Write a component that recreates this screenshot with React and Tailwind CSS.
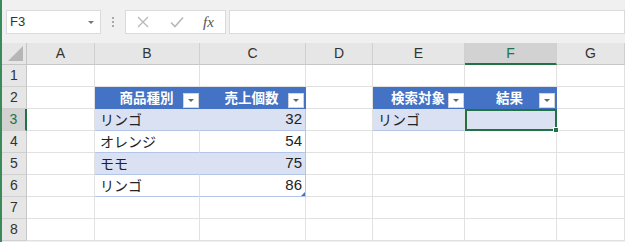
const COLS = ['A', 'B', 'C', 'D', 'E', 'F', 'G']

function Dropdown() {
  return (
    <span className="absolute bottom-0 right-[1px] flex h-[15px] w-[16px] items-center justify-center border border-[#d4d4d4] bg-white">
      <span className="h-0 w-0 border-x-[3px] border-t-[3px] border-x-transparent border-t-[#666]" />
    </span>
  )
}

function Cell({ className = '', children }) {
  return (
    <div className={`flex items-center overflow-hidden border-b border-r border-[#e1e1e1] px-[3px] ${className}`}>
      {children}
    </div>
  )
}

function HeadCell({ label, last }) {
  return (
    <div
      className={`relative flex items-center justify-center border-b border-[#4472c4] bg-[#4472c4] text-[13.5px] font-bold text-white ${
        last ? 'border-r' : ''
      }`}
    >
      <span className="pr-[2px]">{label}</span>
      <Dropdown />
    </div>
  )
}

const band = 'bg-[#d9e1f2] border-b-[#b4c6e7]'
const plain = 'bg-white border-b-[#b4c6e7]'

export default function App() {
  const rows = [
    { n: 1, cells: [null, null, null, null, null, null, null] },
    {
      n: 2,
      cells: [
        null,
        <HeadCell key="b" label="商品種別" />,
        <HeadCell key="c" label="売上個数" last />,
        null,
        <HeadCell key="e" label="検索対象" />,
        <HeadCell key="f" label="結果" last />,
        null,
      ],
    },
    { n: 3, cells: [null, ['リンゴ', band], ['32', band, true], null, ['リンゴ', band], 'sel', null] },
    { n: 4, cells: [null, ['オレンジ', plain], ['54', plain, true], null, null, null, null] },
    { n: 5, cells: [null, ['モモ', band], ['75', band, true], null, null, null, null] },
    { n: 6, cells: [null, ['リンゴ', plain], ['86', plain, true, true], null, null, null, null] },
    { n: 7, cells: [null, null, null, null, null, null, null] },
    { n: 8, cells: [null, null, null, null, null, null, null] },
  ]

  return (
    <div
      className="h-[242px] w-[625px] overflow-hidden border-l-2 border-[#3a8a5a] bg-[#f0f0f0] text-[14px] text-[#222]"
      style={{ fontFamily: '"Noto Sans CJK JP", "Liberation Sans", sans-serif' }}
    >
      {/* formula bar */}
      <div className="flex h-[43px] items-start pt-[10px]">
        <div
          className="ml-[4px] flex h-[24px] w-[95px] items-center border border-[#dadada] bg-white pl-[3px] text-[13px] text-[#333]"
          style={{ fontFamily: '"Liberation Sans", sans-serif' }}
        >
          F3
          <span className="ml-auto mr-[6px] h-0 w-0 border-x-[3px] border-t-[3px] border-x-transparent border-t-[#777]" />
        </div>
        <div className="mx-[11px] flex h-[24px] flex-col items-center justify-center gap-[2px]">
          <span className="h-[2px] w-[2px] bg-[#a8a8a8]" />
          <span className="h-[2px] w-[2px] bg-[#a8a8a8]" />
          <span className="h-[2px] w-[2px] bg-[#a8a8a8]" />
        </div>
        <div className="flex h-[24px] w-[101px] items-center border border-[#dadada] bg-white">
          <svg className="ml-[11px]" width="12" height="12" viewBox="0 0 12 12">
            <path d="M1 1L11 11M11 1L1 11" stroke="#b8b8b8" strokeWidth="1.3" fill="none" />
          </svg>
          <svg className="ml-[21px]" width="14" height="12" viewBox="0 0 14 12">
            <path d="M1 6.5L5 10.5L13 1.5" stroke="#b8b8b8" strokeWidth="1.6" fill="none" />
          </svg>
          <span className="ml-[19px] text-[15px] italic text-[#555]" style={{ fontFamily: '"Liberation Serif", serif' }}>
            fx
          </span>
        </div>
        <div className="ml-[3px] h-[24px] flex-1 border border-[#dadada] bg-white" />
      </div>

      {/* sheet */}
      <div className="grid auto-rows-[22px] grid-cols-[25px_68px_105px_106px_67px_92px_92px_1fr] bg-white">
        <div className="relative border-b border-r border-[#c6c6c6] bg-[#e6e6e6]">
          <span
            className="absolute bottom-[3px] right-[3px] h-0 w-0"
            style={{ borderBottom: '15px solid #b6b6b6', borderLeft: '15px solid transparent' }}
          />
        </div>
        {COLS.map((c) => (
          <div
            key={c}
            className={`flex items-center justify-center border-r border-[#d0d0d0] text-[14px] ${
              c === 'F'
                ? 'border-b-2 border-b-[#217346] bg-[#d2d2d2] text-[#217346]'
                : 'border-b border-b-[#c6c6c6] bg-[#e6e6e6] text-[#333]'
            }`}
            style={{ fontFamily: '"Liberation Sans", sans-serif' }}
          >
            {c}
          </div>
        ))}

        {rows.map((r) => (
          <Row key={r.n} r={r} />
        ))}
      </div>
    </div>
  )
}

function Row({ r }) {
  return (
    <>
      <div
        className={`flex items-center justify-center border-b border-[#d0d0d0] text-[14px] ${
          r.n === 3
            ? 'border-r-2 border-r-[#217346] bg-[#d2d2d2] text-[#217346]'
            : 'border-r border-r-[#c6c6c6] bg-[#e6e6e6] text-[#333]'
        }`}
        style={{ fontFamily: '"Liberation Sans", sans-serif' }}
      >
        {r.n}
      </div>
      {r.cells.map((c, i) => {
        if (c === null) return <Cell key={i} />
        if (c === 'sel')
          return (
            <div key={i} className="relative border-2 border-[#217346] bg-[#d9e1f2]">
              <span className="absolute -bottom-[4px] -right-[4px] h-[6px] w-[6px] border border-white bg-[#217346]" />
            </div>
          )
        if (!Array.isArray(c)) return c
        const [text, bg, num, corner] = c
        const inTableRight = i === 2 ? 'border-r-[#b4c6e7]' : ''
        const bandNoLine = bg === band && i === 1 ? 'border-r-[#d9e1f2]' : ''
        return (
          <Cell key={i} className={`relative ${bg} ${inTableRight} ${bandNoLine} ${num ? 'justify-end' : 'pl-[5px]'}`}>
            <span style={num ? { fontFamily: '"Liberation Sans", sans-serif', fontSize: 15 } : undefined}>{text}</span>
            {corner && (
              <span
                className="absolute bottom-0 right-0 h-0 w-0"
                style={{ borderBottom: '4px solid #4472c4', borderLeft: '4px solid transparent' }}
              />
            )}
          </Cell>
        )
      })}
    </>
  )
}
